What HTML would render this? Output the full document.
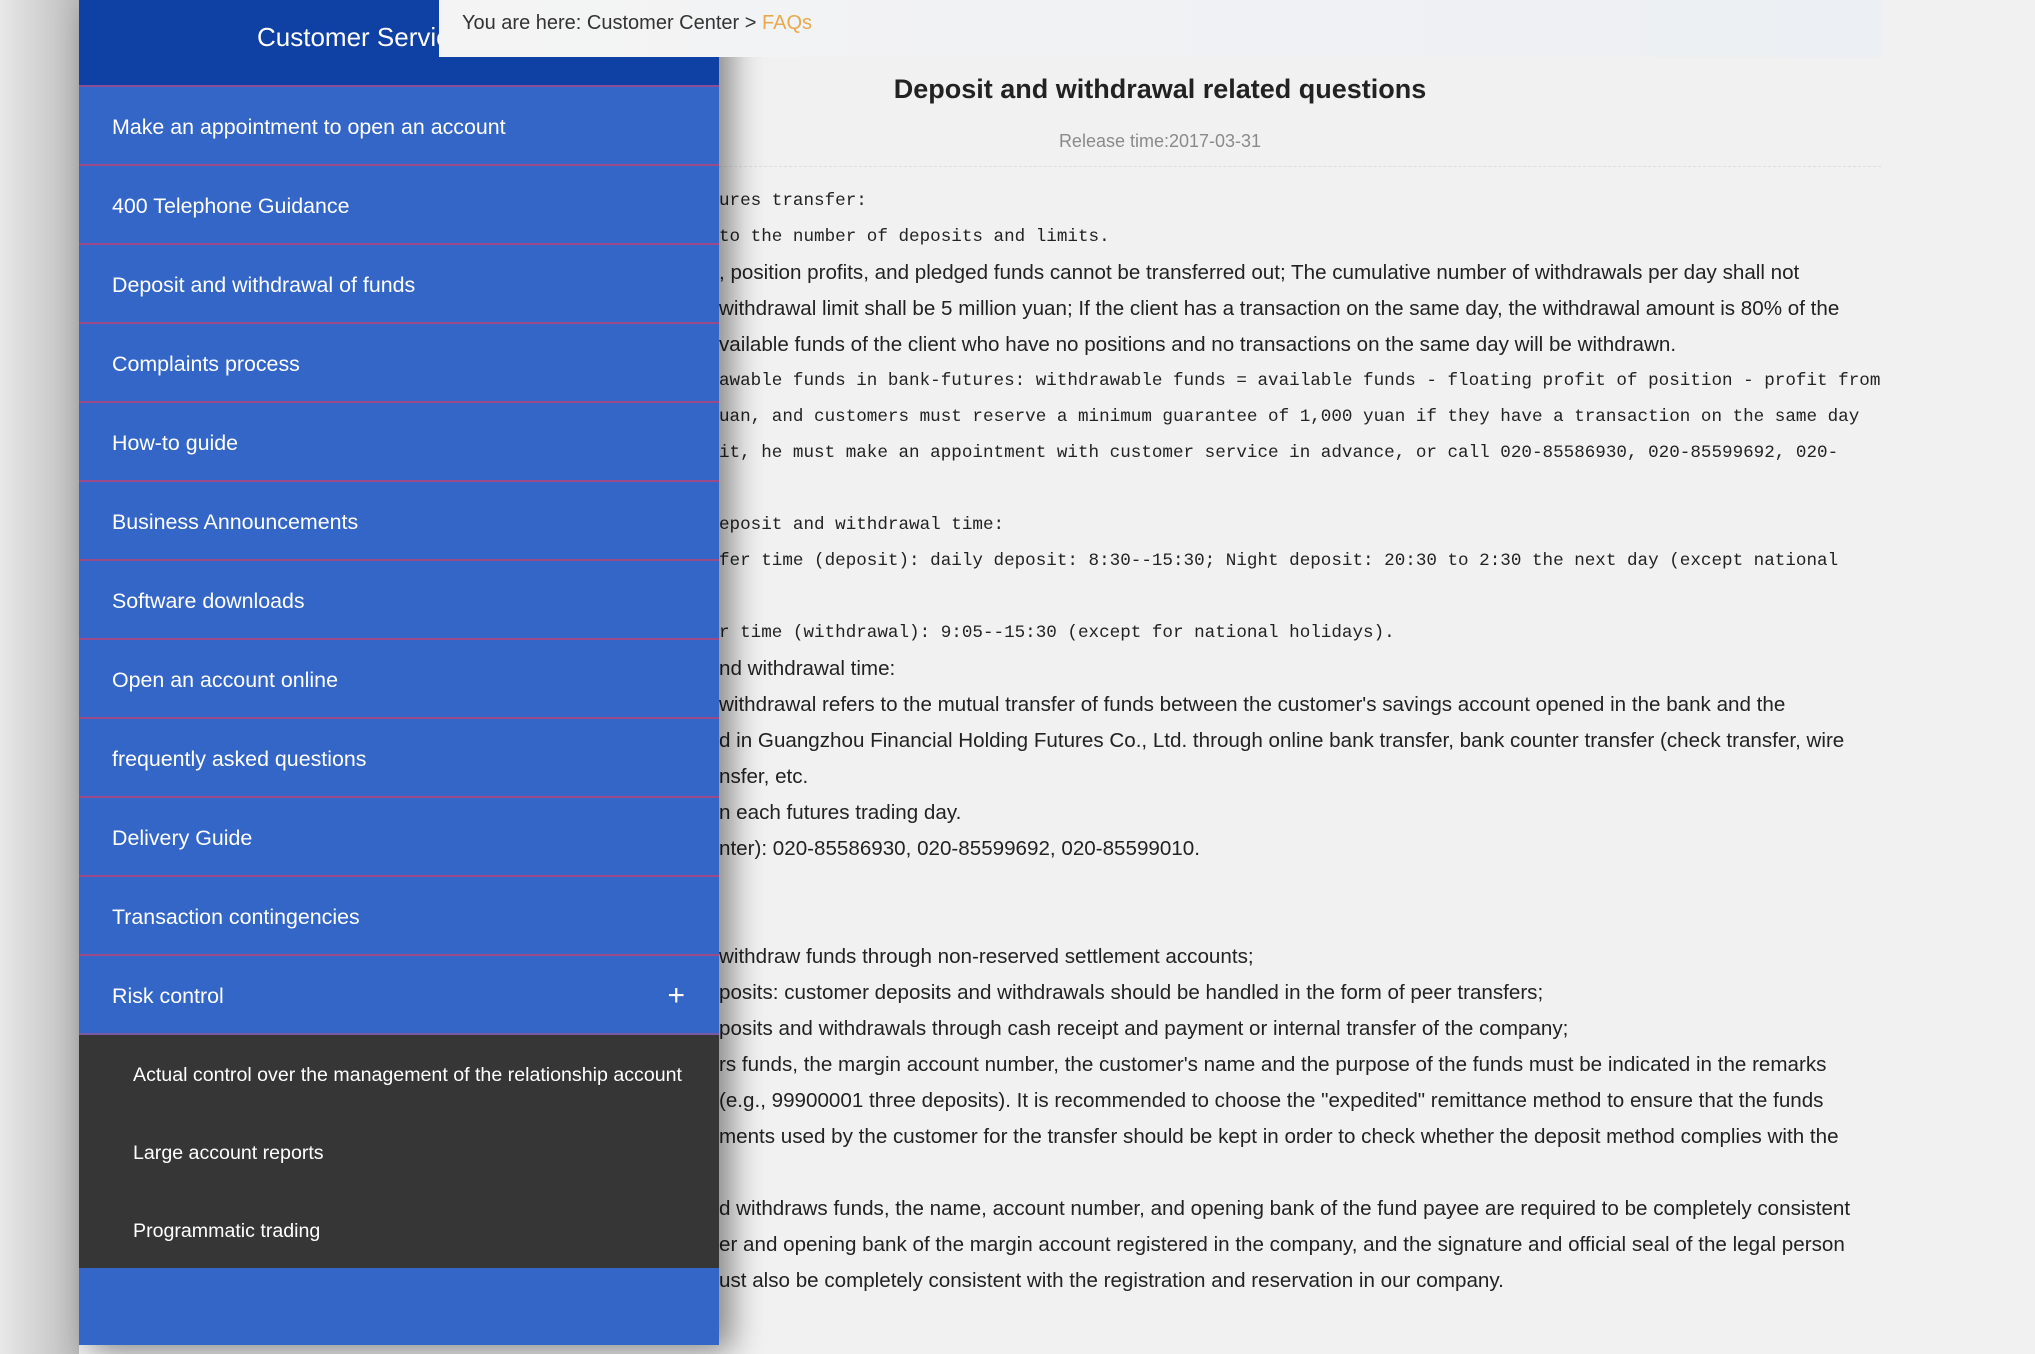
<!DOCTYPE html>
<html><head><meta charset="utf-8"><style>
*{margin:0;padding:0;box-sizing:border-box}
body{width:2035px;height:1354px;overflow:hidden;background:#f1f1f1;position:relative;font-family:"Liberation Sans",sans-serif}
.left{position:absolute;left:0;top:0;width:79px;height:1354px;background:linear-gradient(to right,#e8e8e8,#bdbdbd)}
.side{position:absolute;left:79px;top:0;width:640px;height:1345px;background:#3366c6;box-shadow:12px 6px 30px rgba(0,0,0,.45);z-index:2}
.hd{height:87px;background:#0f40a4;color:#fff;font-size:26px;padding:22px 0 0 178px;border-bottom:2px solid #8a4f9a}
.it{height:79px;border-bottom:2px solid #9b4a8a;color:#fff;font-size:21.4px;padding-left:33px;line-height:80px;position:relative}
.plus{position:absolute;right:34px;top:0;font-size:30px}
.sub{background:#363636;height:233px}
.sub div{height:78px;line-height:80px;color:#fff;font-size:19.6px;padding-left:54px}
.bc{position:absolute;left:439px;top:0;width:1442px;height:57px;background:linear-gradient(to right,#f4f4f4,#eceff3);z-index:3;font-size:20px;color:#333;padding:12px 0 0 23px}
.bc span{color:#e8a94e}
.hdr{position:absolute;left:439px;top:0;width:1442px}
h1{position:absolute;left:0;width:1442px;top:74px;text-align:center;font-size:27px;color:#222}
.rt{position:absolute;top:131px;width:1442px;text-align:center;color:#8a8a8a;font-size:18px}
.main{position:absolute;left:719px;top:0;width:1162px;height:1354px}
.line{position:absolute;top:166px;left:0;width:1162px;border-top:1px dashed #ddd}
.txt{position:absolute;top:183px;left:0;width:1170px;white-space:nowrap;overflow:hidden}
.txt p{height:36px;line-height:36px;font-size:20.6px;color:#222}
.txt p.m{font-family:"Liberation Mono",monospace;font-size:17.6px}
</style></head><body>
<div class="left"></div>
<div class="bc">You are here: Customer Center &gt; <span>FAQs</span></div>
<div class="hdr"><h1>Deposit and withdrawal related questions</h1><div class="rt">Release time:2017-03-31</div></div>
<div class="side">
<div class="hd">Customer Servic</div>
<div class="it">Make an appointment to open an account</div>
<div class="it">400 Telephone Guidance</div>
<div class="it">Deposit and withdrawal of funds</div>
<div class="it">Complaints process</div>
<div class="it">How-to guide</div>
<div class="it">Business Announcements</div>
<div class="it">Software downloads</div>
<div class="it">Open an account online</div>
<div class="it">frequently asked questions</div>
<div class="it">Delivery Guide</div>
<div class="it">Transaction contingencies</div>
<div class="it" style="border-bottom:2px solid #7a5aa0">Risk control<span class="plus">+</span></div>
<div class="sub"><div>Actual control over the management of the relationship account</div><div>Large account reports</div><div>Programmatic trading</div></div>
</div>
<div class="main">
<div class="line"></div>
<div class="txt">
<p class="m">ures transfer:</p>
<p class="m">to the number of deposits and limits.</p>
<p>, position profits, and pledged funds cannot be transferred out; The cumulative number of withdrawals per day shall not</p>
<p>withdrawal limit shall be 5 million yuan; If the client has a transaction on the same day, the withdrawal amount is 80% of the</p>
<p>vailable funds of the client who have no positions and no transactions on the same day will be withdrawn.</p>
<p class="m">awable funds in bank-futures: withdrawable funds = available funds - floating profit of position - profit from</p>
<p class="m">uan, and customers must reserve a minimum guarantee of 1,000 yuan if they have a transaction on the same day</p>
<p class="m">it, he must make an appointment with customer service in advance, or call 020-85586930, 020-85599692, 020-</p>
<p></p>
<p class="m">eposit and withdrawal time:</p>
<p class="m">fer time (deposit): daily deposit: 8:30--15:30; Night deposit: 20:30 to 2:30 the next day (except national</p>
<p></p>
<p class="m">r time (withdrawal): 9:05--15:30 (except for national holidays).</p>
<p>nd withdrawal time:</p>
<p> withdrawal refers to the mutual transfer of funds between the customer's savings account opened in the bank and the</p>
<p>d in Guangzhou Financial Holding Futures Co., Ltd. through online bank transfer, bank counter transfer (check transfer, wire</p>
<p>nsfer, etc.</p>
<p>n each futures trading day.</p>
<p>nter): 020-85586930, 020-85599692, 020-85599010.</p>
<p></p>
<p></p>
<p>withdraw funds through non-reserved settlement accounts;</p>
<p>posits: customer deposits and withdrawals should be handled in the form of peer transfers;</p>
<p>posits and withdrawals through cash receipt and payment or internal transfer of the company;</p>
<p>rs funds, the margin account number, the customer's name and the purpose of the funds must be indicated in the remarks</p>
<p> (e.g., 99900001 three deposits). It is recommended to choose the "expedited" remittance method to ensure that the funds</p>
<p>ments used by the customer for the transfer should be kept in order to check whether the deposit method complies with the</p>
<p></p>
<p>d withdraws funds, the name, account number, and opening bank of the fund payee are required to be completely consistent</p>
<p>er and opening bank of the margin account registered in the company, and the signature and official seal of the legal person</p>
<p>ust also be completely consistent with the registration and reservation in our company.</p>
</div>
</div>
</body></html>
